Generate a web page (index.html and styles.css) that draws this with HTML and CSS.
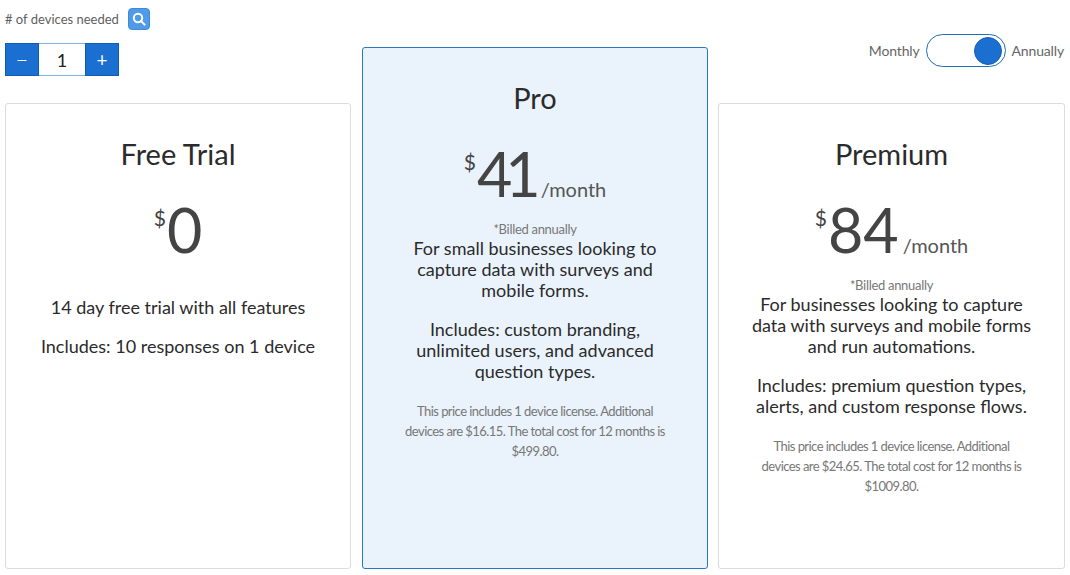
FILE: index.html
```html
<!DOCTYPE html>
<html lang="en">
<head>
    <meta charset="UTF-8">
    <title>Pricing</title>
    <link rel="stylesheet" href="styles.css">
</head>
<body>
    <div class="pricing">
        <div class="devices">
            <div class="devices-label">
                <span># of devices needed</span>
                <button class="info-btn" aria-label="Search">
                    <svg width="14" height="14" viewBox="0 0 14 14" fill="none" stroke="#fff" stroke-width="2"><circle cx="6" cy="6" r="4.2"/><path d="M9 9l3.6 3.6" stroke-linecap="round"/></svg>
                </button>
            </div>
            <div class="stepper">
                <button class="step-btn step-minus">&mdash;</button>
                <span class="step-value">1</span>
                <button class="step-btn">+</button>
            </div>
        </div>

        <div class="billing">
            <span>Monthly</span>
            <span class="toggle"><span class="knob"></span></span>
            <span>Annually</span>
        </div>

        <!-- Plans -->
        <div class="card card-free">
            <h2>Free Trial</h2>
            <div class="price"><sup>$</sup><span class="amount">0</span></div>
            <p class="desc">14 day free trial with all features</p>
            <p class="desc">Includes: 10 responses on 1 device</p>
        </div>

        <div class="card card-pro">
            <h2>Pro</h2>
            <div class="price"><sup>$</sup><span class="amount amount-pro">41</span><span class="period">/month</span></div>
            <div class="billed">*Billed annually</div>
            <p class="desc">For small businesses looking to capture data with surveys and mobile forms.</p>
            <p class="desc">Includes: custom branding, unlimited users, and advanced question types.</p>
            <p class="note">This price includes 1 device license. Additional devices are $16.15. The total cost for 12 months is $499.80.</p>
        </div>

        <div class="card card-premium">
            <h2>Premium</h2>
            <div class="price"><sup>$</sup><span class="amount">84</span><span class="period">/month</span></div>
            <div class="billed">*Billed annually</div>
            <p class="desc">For businesses looking to capture data with surveys and mobile forms and run automations.</p>
            <p class="desc">Includes: premium question types, alerts, and custom response flows.</p>
            <p class="note">This price includes 1 device license. Additional devices are $24.65. The total cost for 12 months is $1009.80.</p>
        </div>
    </div>
</body>
</html>
```
FILE: styles.css
```css
body {
    margin: 0;
    background-color: #ffffff;
    color: #2b2b2b;
    font-family: Lato, "Open Sans", sans-serif;
}
.pricing {
    display: grid;
    grid-template-columns: 346px 346px 347px;
    grid-template-rows: 47px 56px 466px;
    column-gap: 11px;
    padding-left: 5px;
}
.devices {
    grid-column: 1;
    grid-row: 1 / 3;
    padding-top: 8px;
}
.devices-label {
    display: flex;
    align-items: center;
    gap: 9px;
    font-size: 13px;
    color: #5f5f5f;
}
.info-btn {
    width: 22px;
    height: 22px;
    padding: 0;
    display: flex;
    align-items: center;
    justify-content: center;
    background-color: #4f9be8;
    border: 1px solid #3f8ad8;
    border-radius: 4px;
}
.stepper {
    display: flex;
    width: 114px;
    height: 33px;
    margin-top: 13px;
}
.step-btn {
    width: 34px;
    padding: 0;
    background-color: #1a6fd1;
    border: 1px solid #0f5cb5;
    color: #fff;
    font-size: 19px;
    font-family: inherit;
}
.step-minus {
    font-size: 13px;
}
.step-value {
    flex: 1;
    display: flex;
    align-items: center;
    justify-content: center;
    font-size: 18px;
    color: #222;
    border-bottom: 1px solid #7fb0e6;
    border-top: 1px solid #7fb0e6;
}
.billing {
    grid-column: 3;
    grid-row: 1 / 3;
    display: flex;
    justify-content: flex-end;
    align-items: center;
    gap: 6px;
    height: 33px;
    margin: 34px 1px 0 -1px;
    padding-right: 1px;
    font-size: 14px;
    letter-spacing: -0.15px;
    color: #666;
}
.toggle {
    display: flex;
    justify-content: flex-end;
    align-items: center;
    width: 80px;
    height: 33px;
    padding-right: 3px;
    box-sizing: border-box;
    border: 1px solid #1f6db5;
    border-radius: 17px;
}
.knob {
    width: 28px;
    height: 28px;
    border-radius: 50%;
    background-color: #1a6fd1;
    border: 1px solid #155fb5;
    box-sizing: border-box;
}
.card {
    box-sizing: border-box;
    text-align: center;
    border: 1px solid #dcdcdc;
    border-radius: 3px;
    padding: 0 28px;
    grid-row: 3;
}
.card-free { grid-column: 1; }
.card-premium {
    grid-column: 3;
    margin: 0 1px 0 -1px;
}
.card-pro {
    grid-column: 2;
    background-color: #eaf3fc;
    border-color: #2a78bf;
}
.pricing .card-pro { grid-row: 1 / 4; margin-top: 47px; }
h2 {
    margin: 32px 0 0;
    font-size: 29px;
    line-height: 36px;
    font-weight: 400;
    color: #2b2b2b;
}
.price {
    margin-top: 26px;
    height: 72px;
    display: flex;
    justify-content: center;
    align-items: flex-start;
    color: #444;
}
.price sup {
    font-size: 21px;
    line-height: 26px;
    margin: 7px 1px 0 0;
}
.amount {
    font-size: 61px;
    line-height: 72px;
    margin-top: -4px;
}
.amount-pro {
    letter-spacing: -7px;
    margin-right: 3px;
}
.period {
    font-size: 20px;
    line-height: 26px;
    margin: 34px 0 0 4px;
    color: #555;
}
.billed {
    margin-top: 7px;
    font-size: 13px;
    line-height: 16px;
    letter-spacing: -0.3px;
    color: #777;
}
.desc {
    margin: 0 0 18px;
    font-size: 18px;
    line-height: 21px;
    color: #2b2b2b;
}
.billed + .desc { margin-top: 1px; }
.card-free .price { margin-bottom: 27px; }
.note {
    margin: 19px 10px 0;
    font-size: 13px;
    line-height: 20px;
    letter-spacing: -0.55px;
    color: #777;
}
```
